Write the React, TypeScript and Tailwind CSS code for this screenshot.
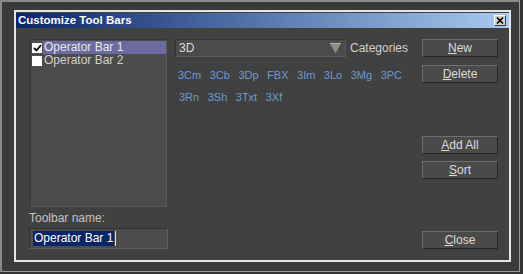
import React from "react";

const font = { fontFamily: '"Liberation Sans", Arial, sans-serif' };

function Btn({ label, u, className = "" }: { label: string; u: number; className?: string }) {
  return (
    <div
      className={
        "w-[76px] h-[18px] flex items-center justify-center text-[12px] text-[#dcdcdc] bg-[#4a4a4a] border border-t-[#6e6e6e] border-l-[#6e6e6e] border-r-[#262626] border-b-[#262626] " +
        className
      }
    >
      <span>
        {label.slice(0, u)}
        <span className="underline">{label[u]}</span>
        {label.slice(u + 1)}
      </span>
    </div>
  );
}

export default function App() {
  const row1 = ["3Cm", "3Cb", "3Dp", "FBX", "3Im", "3Lo", "3Mg", "3PC"];
  const row2 = ["3Rn", "3Sh", "3Txt", "3Xf"];
  return (
    <div className="w-[523px] h-[274px] bg-[#353535] overflow-hidden" style={font}>
      <div className="w-[520px] h-[272px] border-t-2 border-l-2 border-t-[#8a8a8a] border-l-[#8a8a8a] border-r border-b border-r-[#9a9a9a] border-b-[#9a9a9a] bg-[#3b3b3b] pl-[12px] pt-[8px]">
        <div className="w-[497px] h-[252px] border-2 border-[#e6e6e6] bg-[#414141] flex flex-col">
          <div className="mt-[1px] h-[15px] bg-[linear-gradient(to_right,#0a246a,#a6caf0)] flex items-center justify-between pl-[2px] pr-[3px]">
            <span className="text-white font-bold text-[11.5px] leading-none">Customize Tool Bars</span>
            <div className="w-[12px] h-[11px] bg-[#d4d0c8] border border-t-white border-l-white border-r-[#404040] border-b-[#404040] flex items-center justify-center">
              <svg width="8" height="7" viewBox="0 0 8 7">
                <path d="M1 0.5 L7 6.5 M7 0.5 L1 6.5" stroke="#000" strokeWidth="1.6" />
              </svg>
            </div>
          </div>
          <div className="flex pl-[14px] pt-[11px]">
            {/* column 1 */}
            <div className="w-[137px] flex flex-col">
              <div className="h-[168px] bg-[#4c4c4c] border border-t-[#363636] border-l-[#363636] border-r-[#5a5a5a] border-b-[#5a5a5a] pt-[1px]">
                <div className="flex items-center h-[13px]">
                  <div className="w-[10px] h-[10px] bg-white ml-[1px] mr-[1px] flex items-center justify-center">
                    <svg width="9" height="8" viewBox="0 0 9 8">
                      <path d="M1 4 L3.5 6.5 L8 1" stroke="#000" strokeWidth="1.8" fill="none" />
                    </svg>
                  </div>
                  <div className="flex-1 h-[13px] bg-[#6b6ba1] text-[12px] leading-[13px] text-[#e8e8e8] pl-[1px]">
                    Operator Bar 1
                  </div>
                </div>
                <div className="flex items-center h-[13px]">
                  <div className="w-[10px] h-[10px] bg-white ml-[1px] mr-[1px]" />
                  <div className="flex-1 text-[12px] leading-[13px] text-[#cfcfcf] pl-[1px]">Operator Bar 2</div>
                </div>
              </div>
              <div className="mt-[4px] -ml-[1px] h-[15px] text-[12px] leading-[15px] text-[#c4c4c4]">Toolbar name:</div>
              <div className="mt-[2px] -ml-[1px] w-[139px] h-[21px] bg-[#4c4c4c] border border-t-[#303030] border-l-[#303030] border-r-[#5c5c5c] border-b-[#5c5c5c] flex items-center pl-[3px]">
                <span className="bg-[#0a246a] text-white text-[12px] leading-[15px] px-[1px]">Operator Bar 1</span>
                <span className="w-[1px] h-[15px] bg-[#e0e0e0] ml-[1px]" />
              </div>
            </div>
            {/* column 2 */}
            <div className="ml-[8px] w-[239px] flex flex-col">
              <div className="flex items-center">
                <div className="w-[171px] h-[18px] bg-[#4b4b4b] border border-t-[#333] border-l-[#333] border-r-[#5a5a5a] border-b-[#5a5a5a] flex items-center justify-between pl-[3px] pr-[4px]">
                  <span className="text-[12px] text-[#dcdcdc]">3D</span>
                  <svg width="11" height="11" viewBox="0 0 11 11">
                    <path d="M0 0.5 H11 L5.5 10.5 Z" fill="#8c8c8c" />
                    <path d="M0 0.5 H11" stroke="#b0b0b0" strokeWidth="1" />
                  </svg>
                </div>
                <span className="ml-[4px] text-[12px] text-[#cfcfcf]">Categories</span>
              </div>
              <div className="mt-[11px] pl-[3px] flex gap-[8.5px] text-[11px] leading-[14px] text-[#6b9bd2]">
                {row1.map((t) => (
                  <span key={t}>{t}</span>
                ))}
              </div>
              <div className="mt-[8px] pl-[4px] flex gap-[8.5px] text-[11px] leading-[14px] text-[#6b9bd2]">
                {row2.map((t) => (
                  <span key={t}>{t}</span>
                ))}
              </div>
            </div>
            {/* column 3 */}
            <div className="ml-[8px] flex flex-col">
              <Btn label="New" u={0} />
              <Btn label="Delete" u={0} className="mt-[8px]" />
              <Btn label="Add All" u={0} className="mt-[53px]" />
              <Btn label="Sort" u={0} className="mt-[7px]" />
              <Btn label="Close" u={0} className="mt-[52px]" />
            </div>
          </div>
        </div>
      </div>
    </div>
  );
}
